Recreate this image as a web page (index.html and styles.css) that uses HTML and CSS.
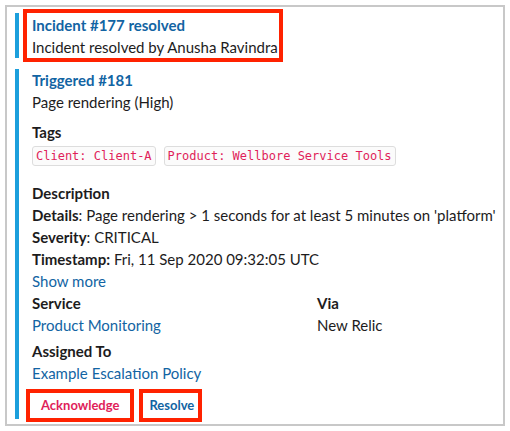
FILE: index.html
```html
<!DOCTYPE html>
<html>
<head>
<meta charset="utf-8">
<link rel="stylesheet" href="styles.css">
</head>
<body>
<div class="frame">
  <div class="att att-first">
    <div class="hl">
      <div class="title">Incident #177 resolved</div>
      <div class="line">Incident resolved by Anusha Ravindra</div>
    </div>
  </div>
  <div class="att att-second">
    <div class="title">Triggered #181</div>
    <div class="line">Page rendering (High)</div>
    <div class="label sec-tags">Tags</div>
    <div class="tags">
      <span class="tag">Client: Client-A</span>
      <span class="tag">Product: Wellbore Service Tools</span>
    </div>
    <div class="label sec-desc">Description</div>
    <div class="line"><b>Details</b>: Page rendering &gt; 1 seconds for at least 5 minutes on 'platform'</div>
    <div class="line"><b>Severity</b>: CRITICAL</div>
    <div class="line"><b>Timestamp:</b> Fri, 11 Sep 2020 09:32:05 UTC</div>
    <div class="line link">Show more</div>
    <div class="fields">
      <div class="field">
        <div class="label">Service</div>
        <div class="line link">Product Monitoring</div>
      </div>
      <div class="field">
        <div class="label">Via</div>
        <div class="line">New Relic</div>
      </div>
      <div class="field field-full">
        <div class="label">Assigned To</div>
        <div class="line link">Example Escalation Policy</div>
      </div>
    </div>
    <div class="actions">
      <span class="btn btn-danger">Acknowledge</span>
      <span class="btn btn-primary">Resolve</span>
    </div>
  </div>
</div>
</body>
</html>
```

FILE: styles.css
```css
html, body {
  margin: 0;
  padding: 0;
  background: #ffffff;
}
body {
  font-family: Lato, "Noto Sans", sans-serif;
  font-size: 15px;
  line-height: 22px;
  color: #1d1c1d;
  padding: 5px;
}
.frame {
  border: 2px solid #c8c8c8;
  padding: 6px 0 0 8px;
  box-sizing: border-box;
  width: 500px;
  height: 421px;
}
.att {
  border-left: 4px solid #1c9fdc;
  padding-left: 13px;
}
.att-first {
  margin-bottom: 11px;
}
.hl {
  display: inline-block;
  vertical-align: top;
  margin-left: -5px;
  padding: 1px 1px 0 5px;
  outline: 4px solid #ff2200;
}
.title {
  font-weight: 700;
  color: #1264a3;
}
.line b {
  font-weight: 700;
}
.link {
  color: #1264a3;
}
.label {
  font-weight: 700;
}
.sec-tags {
  margin-top: 8px;
}
.tags {
  display: flex;
  gap: 8px;
  margin-top: 3px;
}
.tag {
  font-family: "DejaVu Sans Mono", "Liberation Mono", monospace;
  font-size: 12px;
  line-height: 18px;
  color: #e01e5a;
  border: 1px solid #dddddd;
  border-radius: 3px;
  background: #fbfbfb;
  padding: 0 3px;
}
.sec-desc {
  margin-top: 16px;
}
.fields {
  display: grid;
  grid-template-columns: 285px 1fr;
  row-gap: 4px;
}
.field-full {
  grid-column: 1 / 3;
}
.actions {
  display: flex;
  gap: 13px;
  margin-top: 9px;
  margin-left: -2px;
  padding-bottom: 1px;
}
.btn {
  display: inline-block;
  font-size: 13px;
  font-weight: 700;
  line-height: 25px;
  height: 25px;
  padding: 0 11px;
  outline: 4px solid #ff2200;
  background: #ffffff;
}
.btn-danger {
  color: #e01e5a;
}
.btn-primary {
  color: #1264a3;
  padding: 0 4px 0 6px;
}
```
